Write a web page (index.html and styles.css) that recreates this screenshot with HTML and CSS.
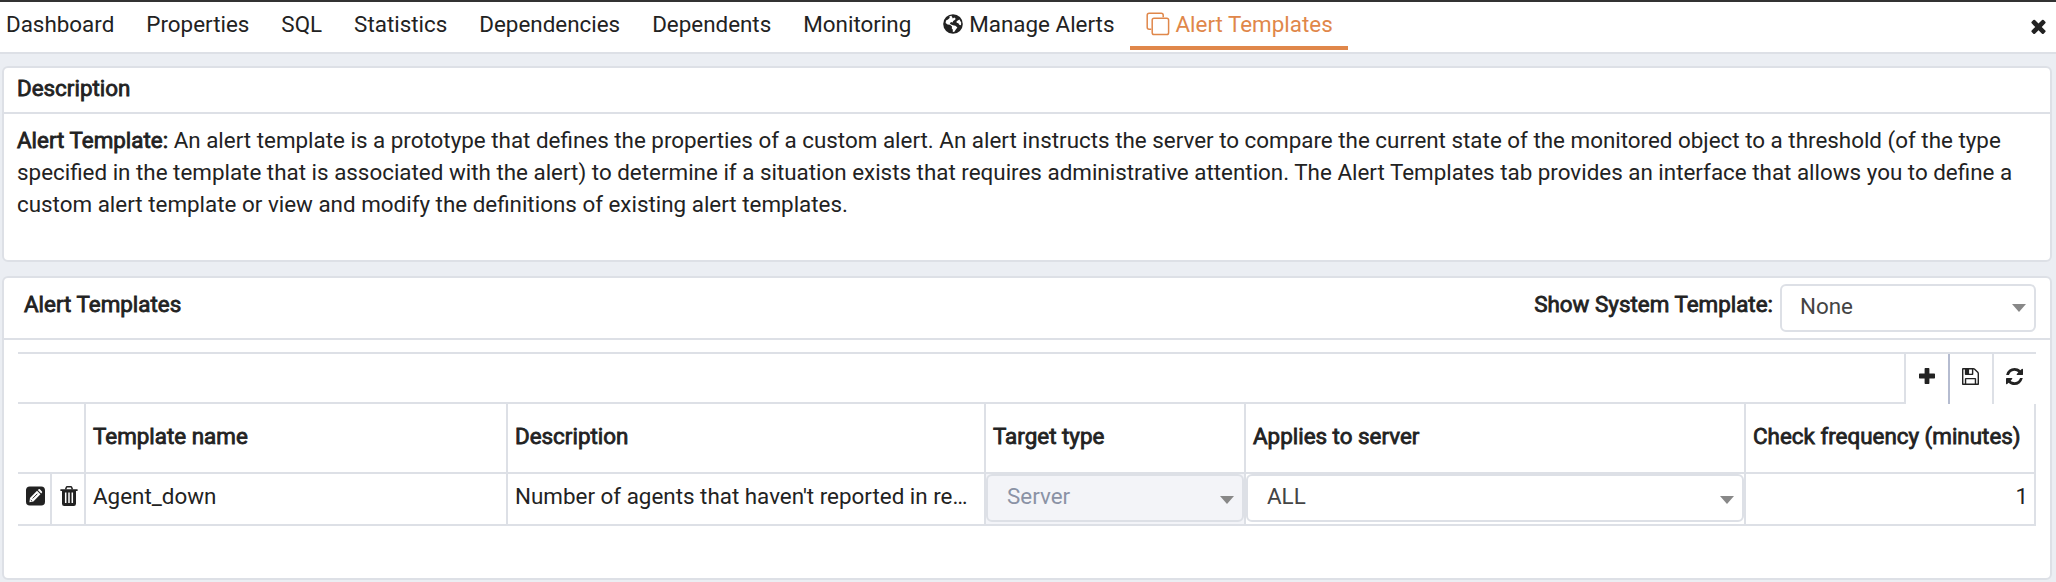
FILE: index.html
```html
<!DOCTYPE html>
<html lang="en">
<head>
<meta charset="utf-8">
<title>Alert Templates</title>
<link rel="stylesheet" href="styles.css">
</head>
<body>
<nav class="tabs">
  <a class="tab">Dashboard</a>
  <a class="tab">Properties</a>
  <a class="tab">SQL</a>
  <a class="tab">Statistics</a>
  <a class="tab">Dependencies</a>
  <a class="tab">Dependents</a>
  <a class="tab">Monitoring</a>
  <a class="tab"><svg class="globe" viewBox="0 0 20 20"><circle cx="10" cy="10" r="9.8" fill="#222"/><path fill="#fff" d="M8.4 1.8 6.2 2.4 6.8 3.8 5 5.6 3 6.4 2.6 9 4.6 10.6 7 10.8 9 12.6 8.8 14.4 9.8 15.4 9.8 18 11.4 17.8 12.8 15.6 14.4 13.4 12.4 11.8 10 11.2 8 10.6 6.8 9.4 8 8 9.6 8.4 10.2 7 12.4 5.4 12.4 4.2 11.2 3.6 9.8 4.6 9.2 3.2ZM13.6 7.2 16.4 5.4 18.2 8.4 18 11.2 16.2 10.8 15.4 9.2 13.6 8.8Z"/></svg>Manage Alerts</a>
  <a class="tab active"><svg class="copy" viewBox="0 0 24 24" fill="none" stroke="currentColor" stroke-width="1.5"><path d="M5.3 17.3H3.2Q1.2 17.3 1.2 15.3V3.2Q1.2 1.2 3.2 1.2H15.2Q17.2 1.2 17.2 3.2V5.2"/><rect x="6.2" y="6.2" width="16.4" height="16.4" rx="1.8"/></svg>Alert Templates</a>
  <svg class="close" viewBox="302 302 1188 1252"><path d="M1490 1322q0 40-28 68l-136 136q-28 28-68 28t-68-28l-294-294-294 294q-28 28-68 28t-68-28l-136-136q-28-28-28-68t28-68l294-294-294-294q-28-28-28-68t28-68l136-136q28-28 68-28t68 28l294 294 294-294q28-28 68-28t68 28l136 136q28 28 28 68t-28 68l-294 294 294 294q28 28 28 68z"/></svg>
</nav>
<main class="page">
  <section class="card about">
    <h2 class="card-head">Description</h2>
    <p class="about-text"><b>Alert Template:</b> An alert template is a prototype that defines the properties of a custom alert. An alert instructs the server to compare the current state of the monitored object to a threshold (of the type specified in the template that is associated with the alert) to determine if a situation exists that requires administrative attention. The Alert Templates tab provides an interface that allows you to define a custom alert template or view and modify the definitions of existing alert templates.</p>
  </section>
  <section class="card templates">
    <header class="templates-head">
      <h2 class="templates-title">Alert Templates</h2>
      <span class="filter-label">Show System Template:</span>
      <div class="select filter"><span>None</span><i class="caret"></i></div>
    </header>
    <div class="grid-wrap">
      <div class="toolbar">
        <div class="toolbar-space"></div>
        <div class="tool"><svg class="plus" viewBox="0 0 16 16"><path d="M6.3 0H9.7Q10.4 0 10.4.7V5.6H15.3Q16 5.6 16 6.3V9.7Q16 10.4 15.3 10.4H10.4V15.3Q10.4 16 9.7 16H6.3Q5.6 16 5.6 15.3V10.4H.7Q0 10.4 0 9.7V6.3Q0 5.6.7 5.6H5.6V.7Q5.6 0 6.3 0Z"/></svg></div>
        <div class="tool dark"><svg class="save" viewBox="128 128 1536 1536"><path d="M512 1536h768v-384h-768v384zm896 0h128v-896q0-14-10-38.5t-20-34.5l-281-281q-10-10-34-20t-39-10v416q0 40-28 68t-68 28h-576q-40 0-68-28t-28-68v-416h-128v1280h128v-416q0-40 28-68t68-28h832q40 0 68 28t28 68v416zm-384-928v-320q0-13-9.5-22.5t-22.5-9.5h-192q-13 0-22.5 9.5t-9.5 22.5v320q0 13 9.5 22.5t22.5 9.5h192q13 0 22.5-9.5t9.5-22.5zm640 32v928q0 40-28 68t-68 28h-1344q-40 0-68-28t-28-68v-1344q0-40 28-68t68-28h928q40 0 88 20t76 48l280 280q28 28 48 76t20 88z"/></svg></div>
        <div class="tool"><svg class="refresh" viewBox="128 128 1536 1536"><path d="M1639 1056q0 5-1 7-64 268-268 434.5t-478 166.5q-146 0-282.5-55t-243.5-157l-129 129q-19 19-45 19t-45-19-19-45v-448q0-26 19-45t45-19h448q26 0 45 19t19 45-19 45l-137 137q71 66 161 102t187 36q134 0 250-65t186-179q11-17 53-117 8-23 30-23h192q13 0 22.5 9.5t9.5 22.5zm25-800v448q0 26-19 45t-45 19h-448q-26 0-45-19t-19-45 19-45l138-138q-148-137-349-137-134 0-250 65t-186 179q-11 17-53 117-8 23-30 23h-199q-13 0-22.5-9.5t-9.5-22.5v-7q65-268 270-434.5t480-166.5q146 0 284 55.5t245 156.5l130-129q19-19 45-19t45 19 19 45z"/></svg></div>
      </div>
      <div class="row head">
        <div class="cell actions"></div>
        <div class="cell">Template name</div>
        <div class="cell">Description</div>
        <div class="cell">Target type</div>
        <div class="cell">Applies to server</div>
        <div class="cell">Check frequency (minutes)</div>
      </div>
      <div class="row body">
        <div class="cell icon"><svg class="edit" viewBox="0 0 20 20"><rect width="20" height="20" rx="4" fill="#222"/><path fill="#fff" d="M3.6 16.6 4.2 12 11.6 4.6 15.2 8.2 7.8 15.8ZM12.4 3.8 13.4 2.9Q14 2.5 14.6 3L16.8 5.2Q17.3 5.8 16.9 6.4L16 7.4Z"/><path d="M5 14.2 6.2 15.3M7 12.6 12 7.6" stroke="#222" stroke-width="1" fill="none"/></svg></div>
        <div class="cell icon"><svg class="trash" viewBox="0 0 18 20"><path fill="none" stroke="#222" stroke-width="1.5" d="M5.6 3.6 6.3 1.4Q6.5.8 7.2.8H10.8Q11.5.8 11.7 1.4L12.4 3.6"/><path d="M.4 3.3H17.6V5H16V17.8Q16 20 13.8 20H4.2Q2 20 2 17.8V5H.4Z"/><path stroke="#fff" stroke-width="1.5" d="M5.7 6.6V17M9 6.6V17M12.3 6.6V17"/></svg></div>
        <div class="cell">Agent_down</div>
        <div class="cell">Number of agents that haven't reported in re…</div>
        <div class="cell field off"><div class="select disabled"><span>Server</span><i class="caret"></i></div></div>
        <div class="cell field"><div class="select"><span>ALL</span><i class="caret"></i></div></div>
        <div class="cell num">1</div>
      </div>
    </div>
  </section>
</main>
</body>
</html>
```
FILE: styles.css
```css
* { box-sizing: border-box; }
body {
  margin: 0;
  height: 582px;
  overflow: hidden;
  background: #ebeef3;
  color: #222;
  font: 22.4px/32px Roboto, sans-serif;
}
svg { display: block; flex: none; fill: #222; }
h2, p { margin: 0; font-size: inherit; }
h2, b, .filter-label, .head { font-weight: 400; -webkit-text-stroke: 0.8px #222; }

.tabs {
  display: flex;
  height: 54px;
  padding-right: 10px;
  border-top: 2px solid #333;
  border-bottom: 2px solid #dde0e6;
  background: #fff;
}
.tab {
  display: flex;
  height: 48px;
  padding: 6px 16px 0;
  white-space: nowrap;
}
.tab:first-child { padding-left: 6px; }
.tab.active { padding-right: 15px; color: #e0874a; border-bottom: 4px solid #e0874a; }
.globe { width: 20px; height: 20px; margin: 6px 6px 0 0; }
.copy { width: 24px; height: 24px; margin: 4px 5px 0 0; fill: none; }
.close { width: 15px; height: 15px; margin: 17px 0 0 auto; }

.page { display: flex; flex-direction: column; gap: 14px; padding: 12px 4px 0 2px; }
.card { border: 2px solid #dde0e6; border-radius: 6px; background: #fff; }
.about { height: 196px; }
.card-head { height: 46px; padding: 4px 13px 0; border-bottom: 2px solid #dde0e6; }
.about-text { padding: 10px 13px 0; }

.templates { height: 304px; }
.templates-head {
  display: flex;
  height: 62px;
  padding: 6px 14px 0 20px;
  border-bottom: 2px solid #dde0e6;
}
.templates-title { flex: 1; padding-top: 4px; }
.filter-label { padding: 4px 7px 0 0; }
.select {
  display: flex;
  justify-content: space-between;
  height: 48px;
  padding: 4px 8px 0 18px;
  border: 2px solid #dde0e6;
  border-radius: 6px;
  background: #fff;
  color: #444;
}
.filter { width: 256px; }
.caret {
  width: 14px;
  height: 8px;
  margin-top: 14px;
  background: #888;
  clip-path: polygon(0 0, 100% 0, 50% 100%);
}
.grid-wrap { padding: 12px 14px 0; }
.toolbar { display: flex; height: 52px; border-top: 2px solid #dde0e6; }
.toolbar-space { flex: 1; border-bottom: 2px solid #dde0e6; }
.tool {
  width: 44px;
  display: flex;
  justify-content: center;
  padding: 14px 1px 0 0;
  border-left: 2px solid #dde0e6;
}
.tool.dark { border-color: #b5bcd0; }
.plus { width: 16px; height: 16px; }
.save, .refresh { width: 17px; height: 17px; }

.row { display: grid; border-bottom: 2px solid #dde0e6; }
.head { height: 70px; grid-template-columns: 68px 422px 478px 260px 500px 290px; }
.body { height: 52px; grid-template-columns: 34px 34px 422px 478px 260px 500px 290px; }
.cell { min-width: 0; padding: 6px 7px 0; border-right: 2px solid #dde0e6; white-space: nowrap; }
.head .cell { padding-top: 16px; }
.cell.icon { display: flex; justify-content: center; padding: 12px 0 0 2px; }
.edit { width: 19px; height: 20px; }
.trash { width: 18px; height: 20px; }
.cell.field { padding: 0; }
.cell.off { background: #f3f4f8; }
.field .select { padding: 4px 8px 0 19px; }
.field .caret { margin-top: 16px; }
.select.disabled { background: #f3f4f8; color: #8a92a5; }
.cell.num { padding-right: 6px; text-align: right; }
```
